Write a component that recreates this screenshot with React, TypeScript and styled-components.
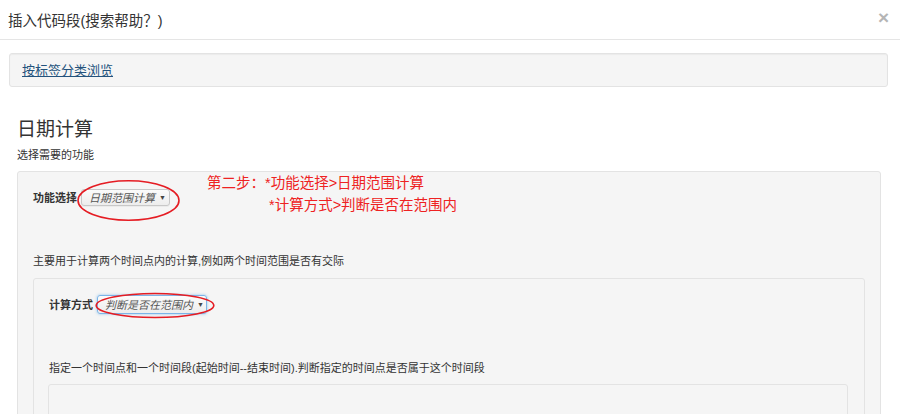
import React from "react";
import styled, { createGlobalStyle, css } from "styled-components";

const GlobalStyle = createGlobalStyle`
  html, body {
    margin: 0;
    padding: 0;
    background: #ffffff;
  }
  body {
    font-family: "Liberation Sans", "Noto Sans CJK SC", sans-serif;
    color: #333333;
    overflow: hidden;
  }
`;

const panelStyle = css`
  background: #f5f5f5;
  border: 1px solid #e3e3e3;
  border-radius: 3px;
`;

const ModalHeader = styled.header`
  display: flex;
  align-items: center;
  justify-content: space-between;
  height: 39px;
  padding: 0 11px 0 8px;
  border-bottom: 1px solid #e5e5e5;
`;

const Title = styled.h4`
  margin: 0;
  font-size: 14.5px;
  font-weight: normal;
  color: #333;
`;

const CloseButton = styled.button`
  border: 0;
  background: none;
  padding: 0;
  margin-top: -4px;
  font-family: "Liberation Sans", sans-serif;
  font-size: 19px;
  font-weight: bold;
  line-height: 1;
  color: #b5b5b5;
  cursor: pointer;
`;

const ModalBody = styled.div`
  padding: 13px 12px 0 9px;
`;

const Well = styled.div`
  ${panelStyle}
  height: 32px;
  display: flex;
  align-items: center;
  padding: 0 12px;
  box-shadow: inset 0 1px 1px rgba(0, 0, 0, 0.04);
`;

const TagLink = styled.a`
  margin-top: -2px;
  font-size: 13px;
  color: #23527c;
  text-decoration: underline;
`;

const Section = styled.section`
  padding: 0 7px 0 8px;
`;

const Heading = styled.h3`
  margin: 31px 0 0;
  font-size: 19px;
  line-height: 23px;
  font-weight: normal;
  color: #333;
`;

const Hint = styled.p`
  margin: 6px 0 0;
  font-size: 11px;
  line-height: 16px;
`;

const Panel = styled.div<{ $gap?: number }>`
  ${panelStyle}
  position: relative;
  margin-top: ${({ $gap }) => $gap ?? 8}px;
  padding: 15px 15px 0;
  min-height: 60px;
`;

const FieldRow = styled.div`
  display: flex;
  align-items: center;
  gap: 4px;
  height: 20px;
`;

const Label = styled.span`
  font-size: 11px;
  font-weight: bold;
  color: #333;
`;

const SelectWrap = styled.span`
  position: relative;
  display: inline-flex;
`;

const FakeSelect = styled.span<{ $focused?: boolean }>`
  display: inline-flex;
  align-items: center;
  gap: 4px;
  box-sizing: border-box;
  white-space: nowrap;
  height: ${({ $focused }) => ($focused ? 19 : 17)}px;
  padding: 0 ${({ $focused }) => ($focused ? 3 : 4)}px 0 7px;
  border: 1px solid ${({ $focused }) => ($focused ? "#7cb4e8" : "#c8c8c8")};
  border-radius: 3px;
  background: linear-gradient(#fbfbfb, #ededed);
  box-shadow: ${({ $focused }) =>
    $focused ? "0 0 3px rgba(102, 175, 233, 0.7)" : "0 1px 0 rgba(0,0,0,0.04)"};
  font-size: 11px;
  font-style: italic;
  color: #555;
`;

const Caret = styled.span`
  width: 6px;
  font-size: 7px;
  font-style: normal;
  color: #444;
`;

const Ring = styled.svg`
  position: absolute;
  overflow: visible;
  pointer-events: none;
`;

const Note = styled.div`
  position: absolute;
  left: 189px;
  top: 0;
  font-size: 14.5px;
  line-height: 22px;
  color: #ee2222;
`;

const NoteLine = styled.div<{ $indent?: number }>`
  padding-left: ${({ $indent }) => $indent ?? 0}px;
`;

const Description = styled.p<{ $top: number }>`
  margin: ${({ $top }) => $top}px 0 0;
  font-size: 11px;
  line-height: 16px;
  color: #333;
`;

const CodeBox = styled.div`
  ${panelStyle}
  margin: 8px 1px 0 -1px;
  height: 60px;
  background: #f5f5f5;
`;

type RingBox = { left: number; top: number; right: number; bottom: number };

function RedRing({ box }: { box: RingBox }) {
  return (
    <Ring
      style={{
        left: -box.left,
        top: -box.top,
        width: `calc(100% + ${box.left + box.right}px)`,
        height: `calc(100% + ${box.top + box.bottom}px)`,
      }}
      viewBox="0 0 100 100"
      preserveAspectRatio="none"
    >
      <ellipse
        cx="50"
        cy="50"
        rx="49"
        ry="48"
        fill="none"
        stroke="#e51c23"
        strokeWidth="1.6"
        vectorEffect="non-scaling-stroke"
      />
    </Ring>
  );
}

function SelectField({
  value,
  focused,
  ring,
}: {
  value: string;
  focused?: boolean;
  ring: RingBox;
}) {
  return (
    <SelectWrap>
      <FakeSelect $focused={focused}>
        {value}
        <Caret>▼</Caret>
      </FakeSelect>
      <RedRing box={ring} />
    </SelectWrap>
  );
}

export default function App() {
  return (
    <>
      <GlobalStyle />
      <ModalHeader>
        <Title>插入代码段(搜索帮助？)</Title>
        <CloseButton aria-label="关闭">×</CloseButton>
      </ModalHeader>
      <ModalBody>
        <Well>
          <TagLink href="#">按标签分类浏览</TagLink>
        </Well>
        <Section>
          <Heading>日期计算</Heading>
          <Hint>选择需要的功能</Hint>
          <Panel $gap={8}>
            <FieldRow>
              <Label>功能选择</Label>
              <SelectField
                value="日期范围计算"
                ring={{ left: 4, top: 9, right: 10, bottom: 15 }}
              />
            </FieldRow>
            <Note>
              <NoteLine>第二步：*功能选择&gt;日期范围计算</NoteLine>
              <NoteLine $indent={62}>*计算方式&gt;判断是否在范围内</NoteLine>
            </Note>
            <Description $top={46}>
              主要用于计算两个时间点内的计算,例如两个时间范围是否有交际
            </Description>
            <Panel $gap={9}>
              <FieldRow>
                <Label>计算方式</Label>
                <SelectField
                  value="判断是否在范围内"
                  focused
                  ring={{ left: 2, top: 2, right: 8, bottom: 4 }}
                />
              </FieldRow>
              <Description $top={46}>
                指定一个时间点和一个时间段(起始时间--结束时间).判断指定的时间点是否属于这个时间段
              </Description>
              <CodeBox />
            </Panel>
          </Panel>
        </Section>
      </ModalBody>
    </>
  );
}
